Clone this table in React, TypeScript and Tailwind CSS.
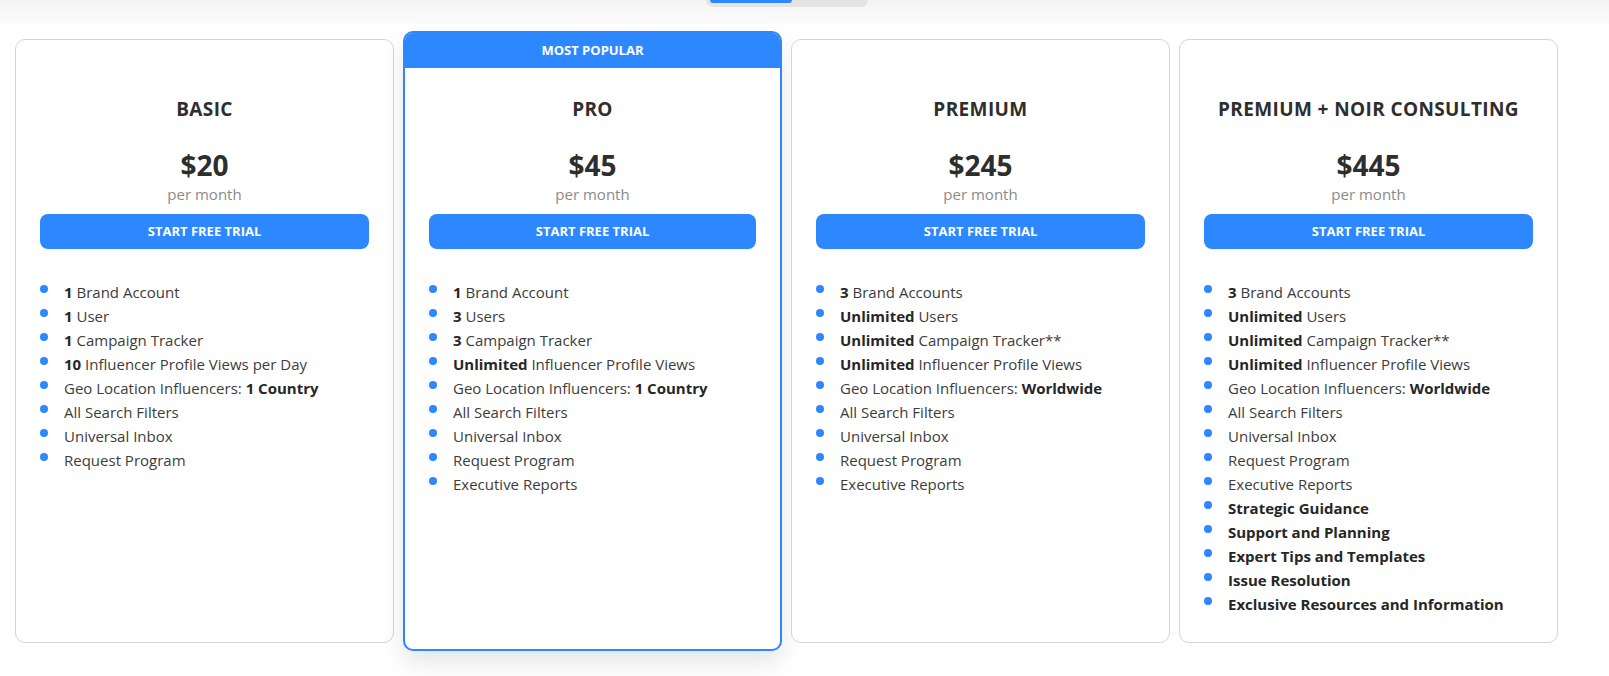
type Seg = { t: string; b?: boolean };
type Plan = {
  name: string;
  price: string;
  features: Seg[][];
  popular?: boolean;
};

const common: Seg[][] = [
  [{ t: "All Search Filters" }],
  [{ t: "Universal Inbox" }],
  [{ t: "Request Program" }],
];

const premiumBase: Seg[][] = [
  [{ t: "3", b: true }, { t: " Brand Accounts" }],
  [{ t: "Unlimited", b: true }, { t: " Users" }],
  [{ t: "Unlimited", b: true }, { t: " Campaign Tracker**" }],
  [{ t: "Unlimited", b: true }, { t: " Influencer Profile Views" }],
  [{ t: "Geo Location Influencers: " }, { t: "Worldwide", b: true }],
  ...common,
  [{ t: "Executive Reports" }],
];

const plans: Plan[] = [
  {
    name: "BASIC",
    price: "$20",
    features: [
      [{ t: "1", b: true }, { t: " Brand Account" }],
      [{ t: "1", b: true }, { t: " User" }],
      [{ t: "1", b: true }, { t: " Campaign Tracker" }],
      [{ t: "10", b: true }, { t: " Influencer Profile Views per Day" }],
      [{ t: "Geo Location Influencers: " }, { t: "1 Country", b: true }],
      ...common,
    ],
  },
  {
    name: "PRO",
    price: "$45",
    popular: true,
    features: [
      [{ t: "1", b: true }, { t: " Brand Account" }],
      [{ t: "3", b: true }, { t: " Users" }],
      [{ t: "3", b: true }, { t: " Campaign Tracker" }],
      [{ t: "Unlimited", b: true }, { t: " Influencer Profile Views" }],
      [{ t: "Geo Location Influencers: " }, { t: "1 Country", b: true }],
      ...common,
      [{ t: "Executive Reports" }],
    ],
  },
  { name: "PREMIUM", price: "$245", features: premiumBase },
  {
    name: "PREMIUM + NOIR CONSULTING",
    price: "$445",
    features: [
      ...premiumBase,
      [{ t: "Strategic Guidance", b: true }],
      [{ t: "Support and Planning", b: true }],
      [{ t: "Expert Tips and Templates", b: true }],
      [{ t: "Issue Resolution", b: true }],
      [{ t: "Exclusive Resources and Information", b: true }],
    ],
  },
];

function PlanCard({ plan }: { plan: Plan }) {
  const shell = plan.popular
    ? "my-[-8px] border-2 border-[#2d87ff] shadow-[0_12px_24px_rgba(0,0,0,0.1)]"
    : "border border-[#d4d4d4]";
  return (
    <div className={`flex w-[379px] shrink-0 flex-col overflow-hidden rounded-[10px] bg-white ${shell}`}>
      {plan.popular ? (
        <div className="flex h-[35px] items-center justify-center bg-[#2d87ff] text-[13px] font-bold text-white">
          MOST POPULAR
        </div>
      ) : null}
      <div className={`flex flex-col px-[24px] pb-[26px] ${plan.popular ? "pt-[27px]" : "pt-[55px]"}`}>
        <h2 className="text-center text-[19px] font-bold leading-[28px] tracking-[0.02em] text-[#2e2e2e]">
          {plan.name}
        </h2>
        <div className="mt-[25px] text-center text-[28px] font-bold leading-[34px] text-[#2e2e2e]">
          {plan.price}
        </div>
        <div className="mt-[2px] text-center text-[15px] leading-[20px] text-[#8a8a8a]">per month</div>
        <button className="mt-[10px] h-[35px] rounded-[8px] bg-[#2d87ff] text-[13px] font-bold text-white">
          START FREE TRIAL
        </button>
        <ul className="mt-[31px] flex flex-col">
          {plan.features.map((f, i) => (
            <li key={i} className="flex items-start gap-[16px] text-[15px] leading-[24px] text-[#3c3c3c]">
              <span className="mt-[5px] h-[8px] w-[8px] shrink-0 rounded-full bg-[#2d87ff]" />
              <span>
                {f.map((s, j) =>
                  s.b ? (
                    <b key={j} className="font-bold text-[#262626]">
                      {s.t}
                    </b>
                  ) : (
                    <span key={j}>{s.t}</span>
                  )
                )}
              </span>
            </li>
          ))}
        </ul>
      </div>
    </div>
  );
}

export default function App() {
  return (
    <main className="min-h-[676px] bg-white font-['Open_Sans',sans-serif]">
      <div className="h-[24px] bg-gradient-to-b from-[#f4f4f4] to-[#fcfcfc]">
        <div className="ml-[706px] flex h-[7px] w-[162px] items-start rounded-b-[8px] bg-[#e4e4e4] px-[4px]">
          <div className="h-[3px] w-[82px] rounded-b-[6px] bg-[#2d87ff]" />
        </div>
      </div>
      <section className="flex items-stretch gap-[9px] pl-[15px] pt-[15px] pb-[27px]">
        {plans.map((p) => (
          <PlanCard key={p.name} plan={p} />
        ))}
      </section>
    </main>
  );
}
